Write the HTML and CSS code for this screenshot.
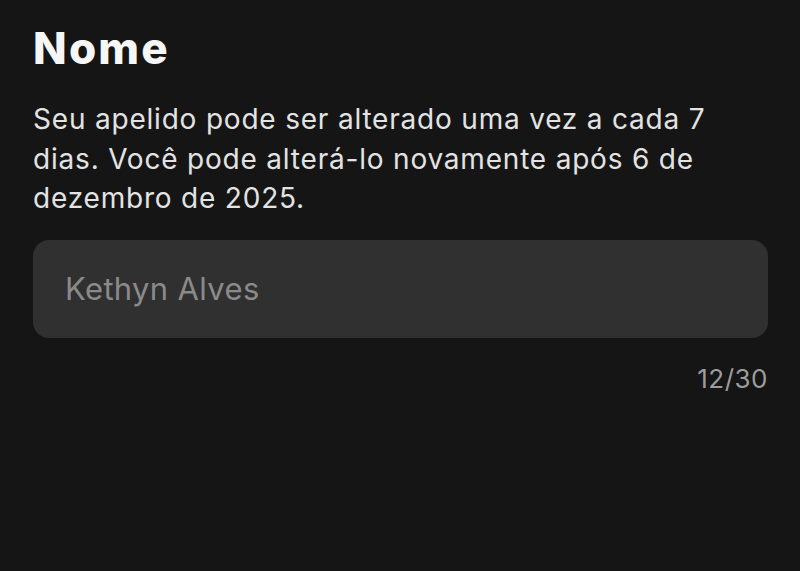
FILE: index.html
```html
<!DOCTYPE html>
<html>
<head>
<meta name="viewport" content="width=device-width, initial-scale=1">
<link rel="stylesheet" href="styles.css">
</head>
<body>

<div class="page">
    <h1 class="title">Nome</h1>
    <p class="hint">Seu apelido pode ser alterado uma vez a cada 7 dias. Você pode alterá-lo novamente após 6 de dezembro de 2025.</p>

    <div class="field">
        <input type="text" id="nickname" placeholder="Kethyn Alves" maxlength="30">
    </div>
    <div class="counter">12/30</div>
</div>

</body>
</html>
```

FILE: styles.css
```css
* {
    box-sizing: border-box;
}

body {
    margin: 0;
    background-color: #151515;
    font-family: Inter, "Noto Sans", sans-serif;
    color: #e2e2e2;
}

.page {
    display: flex;
    flex-direction: column;
    padding: 22px 32px 0 33px;
}

/* Section title */
.title {
    margin: 0;
    font-size: 44px;
    line-height: 52px;
    font-weight: 800;
    color: #f6f6f6;
    letter-spacing: 2.2px;
}

/* Explanation text under the title */
.hint {
    margin: 26px 0 0 0;
    font-size: 28px;
    line-height: 39.5px;
    color: #e3e3e3;
    letter-spacing: 0.8px;
}

/* The rounded input box */
.field {
    margin-top: 21px;
    height: 98px;
    border-radius: 16px;
    background-color: #303030;
    display: flex;
    align-items: center;
    padding: 0 32px;
}

.field input {
    width: 100%;
    border: none;
    outline: none;
    background: transparent;
    padding: 0;
    font-family: inherit;
    font-size: 31px;
    letter-spacing: 0.35px;
    color: #f0f0f0;
}

.field input::placeholder {
    color: #8a8a8a;
}

/* Character counter */
.counter {
    margin-top: 26px;
    align-self: flex-end;
    font-size: 26px;
    line-height: 30px;
    letter-spacing: 0.5px;
    color: #9c9c9c;
}
```
